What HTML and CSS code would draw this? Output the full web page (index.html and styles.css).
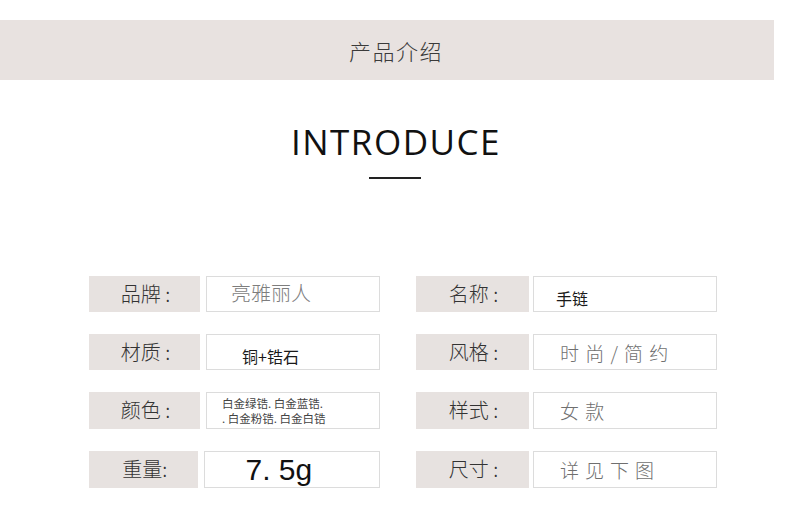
FILE: index.html
```html
<!DOCTYPE html>
<html lang="zh">
<head>
<meta charset="utf-8">
<link rel="stylesheet" href="styles.css">
</head>
<body>
<div class="band"><span class="band-title">产品介绍</span></div>
<div class="intro">
  <h1 class="intro-title">INTRODUCE</h1>
  <div class="intro-line"></div>
</div>
<div class="specs">
  <div class="row row-left">
    <div class="label">品牌&nbsp;:</div>
    <div class="value"><span class="v-brand">亮雅丽人</span></div>
  </div>
  <div class="row row-right">
    <div class="label">名称&nbsp;:</div>
    <div class="value"><span class="v-name">手链</span></div>
  </div>
  <div class="row row-left">
    <div class="label">材质&nbsp;:</div>
    <div class="value"><span class="v-mat">铜+锆石</span></div>
  </div>
  <div class="row row-right">
    <div class="label">风格&nbsp;:</div>
    <div class="value"><span class="v-gray">时 尚 / 简 约</span></div>
  </div>
  <div class="row row-left tall">
    <div class="label">颜色&nbsp;:</div>
    <div class="value"><span class="v-color">白金绿锆. 白金蓝锆.<br>. 白金粉锆. 白金白锆</span></div>
  </div>
  <div class="row row-right tall">
    <div class="label">样式&nbsp;:</div>
    <div class="value"><span class="v-gray">女 款</span></div>
  </div>
  <div class="row row-left tall">
    <div class="label">重量:</div>
    <div class="value wide"><span class="v-weight">7. 5g</span></div>
  </div>
  <div class="row row-right tall">
    <div class="label">尺寸&nbsp;:</div>
    <div class="value"><span class="v-gray wide-ls">详见下图</span></div>
  </div>
</div>
</body>
</html>
```
FILE: styles.css
```css
html, body {
  margin: 0;
  padding: 0;
  background: #ffffff;
}
body {
  width: 790px;
  height: 519px;
  overflow: hidden;
  font-family: "Noto Sans CJK SC", "Noto Sans", sans-serif;
  color: #333;
}
.band {
  margin-top: 20px;
  width: 774px;
  height: 60px;
  background: #e8e2e0;
  display: flex;
  align-items: center;
  justify-content: center;
}
.band-title {
  font-size: 22px;
  font-weight: 300;
  color: #3a3a3a;
  letter-spacing: 1.5px;
  padding-left: 18px;
}
.intro {
  display: flex;
  flex-direction: column;
  align-items: center;
  padding-top: 38px;
}
.intro-title {
  margin: 0;
  font-family: "Open Sans", sans-serif;
  font-weight: 400;
  font-size: 35px;
  line-height: 48px;
  letter-spacing: 1.5px;
  color: #111;
  padding-left: 2px;
}
.intro-line {
  margin-top: 11px;
  width: 52px;
  height: 2px;
  background: #222;
}
.specs {
  margin-top: 97px;
  margin-left: 89px;
  display: grid;
  grid-template-columns: 291px 301px;
  column-gap: 36px;
  row-gap: 22px;
}
.row {
  display: flex;
  height: 36px;
}
.row.tall { height: 37px; }
.row-left { gap: 6px; }
.row-right { gap: 4px; }
.label {
  background: #e7e2e0;
  display: flex;
  align-items: center;
  justify-content: center;
  font-size: 20px;
  font-weight: 300;
  color: #333;
  padding-bottom: 2px;
  padding-left: 2px;
  box-sizing: border-box;
}
.row-left .label { width: 111px; }
.row-right .label { width: 113px; }
.value {
  border: 1px solid #dcdcdc;
  box-sizing: border-box;
  background: #fff;
  display: flex;
  align-items: center;
}
.row-left .value { width: 174px; }
.row-left .value.wide { width: 178px; }
.row-right .value { width: 184px; }
.v-brand {
  padding-left: 24px;
  font-size: 20px;
  font-weight: 300;
  color: #7d7d7d;
  padding-bottom: 3px;
}
.v-name {
  padding-left: 22px;
  font-size: 16px;
  color: #1a1a1a;
  padding-top: 8px;
}
.v-mat {
  padding-left: 35px;
  font-size: 16px;
  color: #1a1a1a;
  padding-top: 8px;
}
.v-gray {
  padding-left: 26px;
  font-size: 19px;
  font-weight: 300;
  color: #6f6f6f;
  letter-spacing: 1px;
}
.v-gray.wide-ls { letter-spacing: 6px; }
.v-color {
  padding-left: 15px;
  font-size: 11.5px;
  line-height: 15px;
  color: #444;
}
.v-weight {
  padding-left: 40px;
  font-family: "Liberation Sans", sans-serif;
  font-size: 30px;
  color: #111;
}
```
